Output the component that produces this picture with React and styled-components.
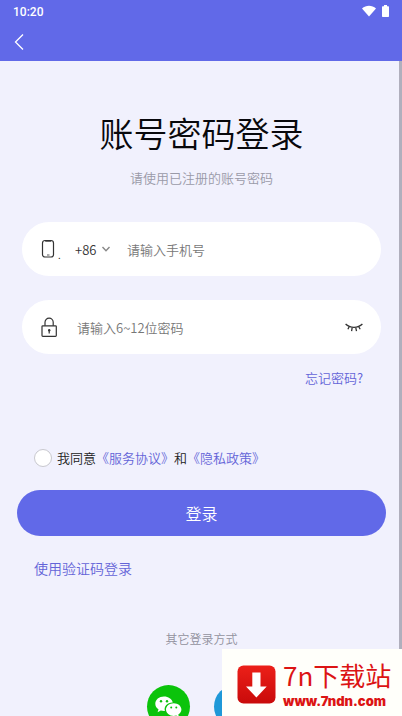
import React, { useState } from "react";
import styled, { createGlobalStyle } from "styled-components";

const GlobalStyle = createGlobalStyle`
  * {
    box-sizing: border-box;
  }
  body {
    margin: 0;
    background: #f1f1fd;
    font-family: "Noto Sans CJK SC", "Noto Sans", sans-serif;
    font-weight: 350;
  }
  a {
    color: #6464d8;
    text-decoration: none;
  }
  button, input, select {
    font: inherit;
  }
`;

const Screen = styled.div`
  display: flex;
  flex-direction: column;
  height: 100vh;
  overflow: hidden;
`;

const Header = styled.header`
  flex: none;
  background: #6169e8;
  color: #fff;
`;

const StatusBar = styled.div`
  display: flex;
  align-items: center;
  justify-content: space-between;
  height: 24px;
  padding: 0 13px;
  font: 500 12px/24px Roboto, sans-serif;
`;

const StatusIcons = styled.div`
  display: flex;
  align-items: center;
  gap: 6px;
  height: 20px;
  padding-bottom: 3px;
`;

const NavBar = styled.nav`
  display: flex;
  align-items: center;
  height: 37px;
  padding: 0 12px 2px;
`;

const IconButton = styled.button`
  display: flex;
  padding: 0;
  border: 0;
  background: none;
  color: inherit;
`;

const Main = styled.main`
  flex: 1;
  min-height: 0;
  padding: 47px 13px 0 17px;
  border-right: 3px solid #b0afbd;
`;

const Title = styled.h1`
  margin: 0;
  color: #08080c;
  font-size: 34px;
  font-weight: 350;
  line-height: 50px;
  text-align: center;
`;

const Subtitle = styled.p`
  margin: 10px 0 34px;
  color: #9a9aa8;
  font-size: 13px;
  line-height: 20px;
  text-align: center;
`;

const Fields = styled.div`
  display: grid;
  gap: 24px;
  padding: 0 5px;
`;

const Field = styled.div`
  display: flex;
  align-items: center;
  height: 54px;
  padding: 0 18px;
  border-radius: 27px;
  background: #fff;
  color: #333;
  font-size: 13px;
`;

const FieldLabel = styled.label`
  display: flex;
  align-items: flex-end;
  width: ${props => props.$width};
  height: 20px;
  font-size: 10px;
  line-height: 8px;
`;

const AreaCode = styled.div`
  display: flex;
  align-items: center;
  gap: 2px;
  width: 52px;
`;

const CodeSelect = styled.select`
  appearance: none;
  width: 24px;
  padding: 0;
  border: 0;
  background: none;
  color: #333;
`;

const TextInput = styled.input`
  flex: 1;
  min-width: 0;
  padding: 0;
  border: 0;
  outline: 0;
  background: none;
  color: #333;

  &::placeholder {
    color: #777;
    opacity: 1;
  }
`;

const Forgot = styled.div`
  padding: 14px 23px 0;
  font-size: 13px;
  line-height: 20px;
  text-align: right;
`;

const Agreement = styled.div`
  display: flex;
  align-items: center;
  gap: 5px;
  margin: 60px 17px 22px;
  color: #222;
  font-size: 13px;
  line-height: 20px;
`;

const Checkbox = styled.input`
  appearance: none;
  width: 18px;
  height: 18px;
  margin: 0;
  border: 1px solid #c8c8ce;
  border-radius: 50%;
  background: #fff;

  &:checked {
    background: #6169e8;
  }
`;

const SubmitButton = styled.button`
  display: block;
  width: 100%;
  height: 46px;
  padding: 0;
  border: 0;
  border-radius: 23px;
  background: #6169e8;
  color: #fff;
  font-size: 16px;
`;

const CodeLogin = styled.div`
  padding: 22px 17px 0;
  font-size: 14px;
  line-height: 20px;
`;

const OtherTitle = styled.p`
  margin: 51px 0 36px;
  color: #92929e;
  font-size: 12px;
  line-height: 20px;
  text-align: center;
`;

const Socials = styled.div`
  display: flex;
  justify-content: center;
  gap: 24px;
`;

const SocialButton = styled.button`
  width: 43px;
  height: 43px;
  padding: 0;
  border: 0;
  border-radius: 50%;
  background: ${props => props.$color};
`;

const Badge = styled.a`
  position: fixed;
  right: 0;
  bottom: 0;
  display: flex;
  align-items: center;
  gap: 7px;
  width: 180px;
  height: 67px;
  padding: 4px 10px 0 15px;
  background: #fffffa;
  color: #dc1414;
`;

const BadgeText = styled.span`
  display: flex;
  flex-direction: column;
  padding-bottom: 4px;
`;

const BadgeName = styled.span`
  font-size: 26px;
  font-weight: 400;
  line-height: 36px;
  white-space: nowrap;
`;

const BadgeUrl = styled.span`
  font: 900 13px/16px Inter, sans-serif;
`;

const WifiIcon = () => (
  <svg width="14" height="12" viewBox="0 0 14 12" fill="#fff">
    <path d="M0 3.4C4-.3 10-.3 14 3.4L7 11.6Z" />
  </svg>
);

const BatteryIcon = () => (
  <svg width="7" height="12" viewBox="0 0 7 12" fill="#fff">
    <path d="M2 0h3v1.3h1.3q.7 0 .7.7v9.3q0 .7-.7.7H.7q-.7 0-.7-.7V2q0-.7.7-.7H2Z" />
  </svg>
);

const BackIcon = () => (
  <svg width="14" height="16" viewBox="0 0 14 16" fill="none" stroke="#fff" strokeWidth="1.3">
    <path d="M11 .5 3.5 8l7.5 7.5" />
  </svg>
);

const PhoneIcon = () => (
  <svg width="18" height="20" viewBox="0 0 18 20" fill="none" stroke="#333">
    <rect x="2.5" y="1.5" width="11" height="16.5" rx="2.5" strokeWidth="1.2" />
    <path d="M5.2 2.4h6M7 16h2.5" strokeWidth=".8" />
  </svg>
);

const ChevronIcon = () => (
  <svg width="10" height="8" viewBox="0 0 10 8" fill="none" stroke="#888" strokeWidth="1.4">
    <path d="m1.5 2 3.5 3.7L8.5 2" />
  </svg>
);

const LockIcon = () => (
  <svg width="18" height="20" viewBox="0 0 18 20" fill="none" stroke="#333" strokeWidth="1.2">
    <rect x="2" y="8.8" width="14.3" height="10.5" rx=".8" />
    <path d="M5 8.8V5.2a4.1 4.1 0 0 1 8.2 0v3.600M9.200 13v3.500" />
    <circle cx="9.2" cy="13.3" r="1.2" fill="#333" stroke="none" />
  </svg>
);

const EyeClosedIcon = () => (
  <svg width="18" height="10" viewBox="0 0 18 10" fill="none" stroke="#333" strokeWidth="1.3">
    <path d="M.6 2C5 6.400 13 6.400 17.400 2M4.300 4.500 2.900 7.300M7.200 5.300l-.6 3.900M10.700 5.300l.8 3.900M13.600 4.500l1.600 2.800" />
  </svg>
);

const WechatIcon = () => (
  <svg width="43" height="43" viewBox="0 0 43 43">
    <path
      fill="#fff"
      d="M17 11.500c-4.900 0-8.700 3.200-8.700 7.200 0 2.300 1.200 4.300 3.200 5.600l-.9 2.900 3.200-1.700c1.500.4 2.800.5 4.100.4-1.300-4.600 2.700-8.700 7.900-8.500-.9-3.500-4.500-5.900-8.800-5.900Z"
    />
    <path
      fill="#fff"
      d="M26.700 18.200c-4.300 0-7.700 2.800-7.700 6.400s3.400 6.400 7.700 6.400c.9 0 1.800-.1 2.600-.4l2.700 1.500-.7-2.500c1.900-1.200 3.100-3 3.100-5 0-3.600-3.400-6.400-7.700-6.400Z"
    />
    <g fill="#0bbf0b">
      <circle cx="14" cy="16.3" r="1.2" />
      <circle cx="20" cy="16.3" r="1.2" />
      <circle cx="24.2" cy="22.5" r="1" />
      <circle cx="29.3" cy="22.5" r="1" />
    </g>
  </svg>
);

const DownloadIcon = () => (
  <svg width="39" height="39" viewBox="0 0 39 39">
    <defs>
      <linearGradient id="badgeRed" x1="0" y1="0" x2="0" y2="1">
        <stop offset="0" stopColor="#ec2019" />
        <stop offset="1" stopColor="#c90a0a" />
      </linearGradient>
    </defs>
    <rect x=".5" y=".5" width="38" height="38" rx="6" fill="url(#badgeRed)" />
    <path d="M15.300 7.500h8.200v14h6.200L19.400 32.500 9 21.500h6.300Z" fill="#fff" />
  </svg>
);

const App = () => {
  const [visible, setVisible] = useState(false);

  return (
    <Screen>
      <GlobalStyle />
      <Header>
        <StatusBar>
          <span>10:20</span>
          <StatusIcons>
            <WifiIcon />
            <BatteryIcon />
          </StatusIcons>
        </StatusBar>
        <NavBar>
          <IconButton type="button" aria-label="返回">
            <BackIcon />
          </IconButton>
        </NavBar>
      </Header>
      <Main>
        <Title>账号密码登录</Title>
        <Subtitle>请使用已注册的账号密码</Subtitle>
        <form onSubmit={e => e.preventDefault()}>
          <Fields>
            <Field>
              <FieldLabel htmlFor="phone" aria-label="手机号" $width="35px">
                <PhoneIcon />.
              </FieldLabel>
              <AreaCode>
                <CodeSelect aria-label="区号">
                  <option>+86</option>
                </CodeSelect>
                <ChevronIcon />
              </AreaCode>
              <TextInput id="phone" type="tel" placeholder="请输入手机号" />
            </Field>
            <Field>
              <FieldLabel htmlFor="password" aria-label="密码" $width="37px">
                <LockIcon />
              </FieldLabel>
              <TextInput
                id="password"
                type={visible ? "text" : "password"}
                placeholder="请输入6~12位密码"
              />
              <IconButton
                type="button"
                aria-label="显示密码"
                onClick={() => setVisible(!visible)}
              >
                <EyeClosedIcon />
              </IconButton>
            </Field>
          </Fields>
          <Forgot>
            <a href="#forgot">忘记密码?</a>
          </Forgot>
          <Agreement>
            <Checkbox id="agree" type="checkbox" />
            <label htmlFor="agree">
              我同意<a href="#terms">《服务协议》</a>和
              <a href="#privacy">《隐私政策》</a>
            </label>
          </Agreement>
          <SubmitButton type="submit">登录</SubmitButton>
        </form>
        <CodeLogin>
          <a href="#code">使用验证码登录</a>
        </CodeLogin>
        <OtherTitle>其它登录方式</OtherTitle>
        <Socials>
          <SocialButton type="button" aria-label="微信" $color="#0bc30b">
            <WechatIcon />
          </SocialButton>
          <SocialButton type="button" aria-label="QQ" $color="#1f98d8" />
        </Socials>
      </Main>
      <Badge href="#download">
        <DownloadIcon />
        <BadgeText>
          <BadgeName>7n下载站</BadgeName>
          <BadgeUrl>www.7ndn.com</BadgeUrl>
        </BadgeText>
      </Badge>
    </Screen>
  );
};

export default App;
